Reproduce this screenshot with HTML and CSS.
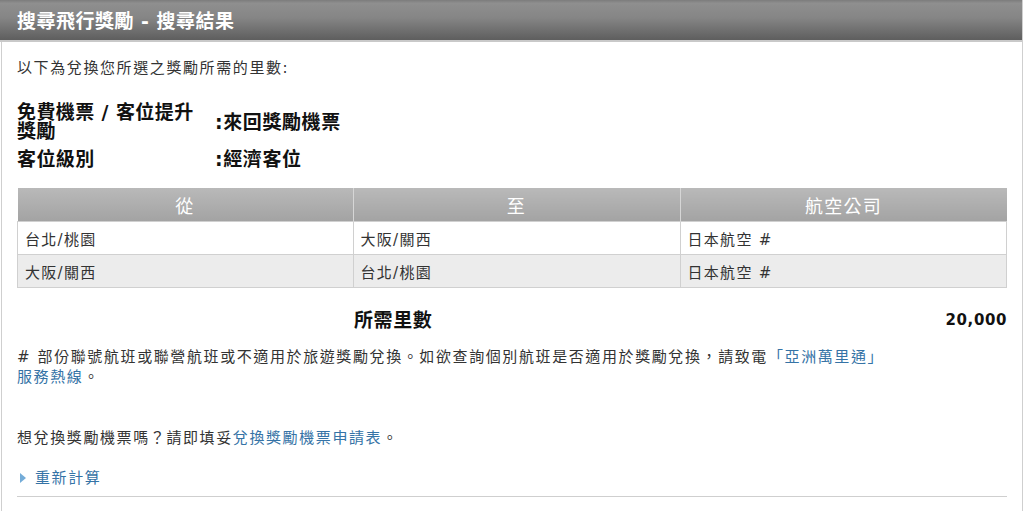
FILE: index.html
```html
<!DOCTYPE html>
<html lang="zh-Hant">
<head>
    <meta charset="UTF-8">
    <title>搜尋飛行獎勵 - 搜尋結果</title>
    <link rel="stylesheet" href="styles.css">
</head>
<body>
    <div class="page">
        <header class="title-bar">
            <h1>搜尋飛行獎勵 - 搜尋結果</h1>
        </header>

        <div class="content">
            <p class="intro">以下為兌換您所選之獎勵所需的里數:</p>

            <div class="info">
                <div class="info-row">
                    <div class="info-label">免費機票 / 客位提升獎勵</div>
                    <div class="info-value">:來回獎勵機票</div>
                </div>
                <div class="info-row">
                    <div class="info-label">客位級別</div>
                    <div class="info-value">:經濟客位</div>
                </div>
            </div>

            <table class="routes">
                <thead>
                    <tr>
                        <th class="col-from">從</th>
                        <th class="col-to">至</th>
                        <th>航空公司</th>
                    </tr>
                </thead>
                <tbody>
                    <tr>
                        <td>台北/桃園</td>
                        <td>大阪/關西</td>
                        <td>日本航空 #</td>
                    </tr>
                    <tr class="alt">
                        <td>大阪/關西</td>
                        <td>台北/桃園</td>
                        <td>日本航空 #</td>
                    </tr>
                </tbody>
            </table>

            <div class="miles">
                <div class="miles-spacer"></div>
                <div class="miles-label">所需里數</div>
                <div class="miles-value">20,000</div>
            </div>

            <p class="note"># 部份聯號航班或聯營航班或不適用於旅遊獎勵兌換。如欲查詢個別航班是否適用於獎勵兌換，請致電<a href="#">「亞洲萬里通」</a> <a href="#" class="nowrap">服務熱線</a>。</p>

            <p class="apply">想兌換獎勵機票嗎？請即填妥<a href="#">兌換獎勵機票申請表</a>。</p>

            <p class="recalc"><a href="#">重新計算</a></p>

            <div class="rule"></div>
        </div>
    </div>
</body>
</html>
```

FILE: styles.css
```css
body {
    margin: 0;
    padding: 0;
    background-color: #fff;
    font-family: "DejaVu Sans", "Noto Sans CJK TC", sans-serif;
    color: #333;
}
.page {
    width: 1020px;
    margin-left: 1px;
    border-left: 1px solid #cfcfcf;
    border-right: 1px solid #cfcfcf;
    padding-bottom: 14px;
}
.title-bar {
    height: 40px;
    margin-left: -2px;
    background: linear-gradient(#7c7c7c, #8f8f8f 8%, #858585 45%, #5e5e5e);
    border-bottom: 2px solid #c9c9c9;
}
.title-bar h1 {
    margin: 0;
    padding-left: 17px;
    font-size: 19px;
    line-height: 42px;
    font-weight: bold;
    letter-spacing: 0.5px;
    color: #fff;
}
.content {
    padding: 0 15px;
}
.intro {
    margin: 16px 0 0;
    font-size: 15px;
    line-height: 20px;
    letter-spacing: 1.6px;
}
.info {
    margin-top: 25px;
    display: flex;
    flex-direction: column;
    gap: 9px;
    color: #111;
}
.info-row {
    display: flex;
    align-items: center;
}
.info-label {
    width: 184px;
    margin-right: 14px;
    font-size: 19px;
    line-height: 19px;
    font-weight: bold;
    letter-spacing: 0.4px;
}
.info-value {
    font-size: 19px;
    line-height: 19px;
    font-weight: bold;
    letter-spacing: 0.6px;
}
.routes {
    margin-top: 19px;
    width: 990px;
    border-collapse: collapse;
    font-size: 15px;
    letter-spacing: 1.3px;
}
.routes th {
    height: 33px;
    padding: 0;
    background: linear-gradient(#b9b9b9, #a3a3a3);
    color: #fff;
    font-size: 18px;
    font-weight: normal;
    border-left: 1px solid #d6d6d6;
}
.routes th:first-child {
    border-left: none;
}
.col-from {
    width: 335px;
}
.col-to {
    width: 326px;
}
.routes td {
    height: 32px;
    padding: 0 0 0 7px;
    border: 1px solid #d0d0d0;
    background-color: #fff;
}
.routes tr.alt td {
    background-color: #ececec;
}
.miles {
    display: flex;
    margin-top: 18px;
    line-height: 28px;
    color: #111;
}
.miles-spacer {
    width: 337px;
}
.miles-label {
    flex: 1;
    font-size: 19px;
    font-weight: bold;
    letter-spacing: 0.6px;
}
.miles-value {
    width: 120px;
    text-align: right;
    font-size: 15px;
    font-weight: bold;
    letter-spacing: 0.6px;
}
.note {
    max-width: 890px;
    margin: 13px 0 0;
    font-size: 15px;
    line-height: 20px;
    letter-spacing: 1.6px;
}
a {
    color: #3573a6;
    text-decoration: none;
}
.nowrap {
    white-space: nowrap;
}
.apply {
    margin: 41px 0 0;
    font-size: 15px;
    line-height: 20px;
    letter-spacing: 1.6px;
}
.recalc {
    margin: 20px 0 0;
    font-size: 15px;
    line-height: 20px;
    letter-spacing: 1.6px;
}
.recalc a {
    display: inline-flex;
    align-items: center;
}
.recalc a::before {
    content: "";
    width: 0;
    height: 0;
    margin: 0 9px 0 3px;
    border-top: 5px solid transparent;
    border-bottom: 5px solid transparent;
    border-left: 6px solid #74acd8;
}
.rule {
    margin-top: 8px;
    border-top: 1px solid #cfcfcf;
}
```
